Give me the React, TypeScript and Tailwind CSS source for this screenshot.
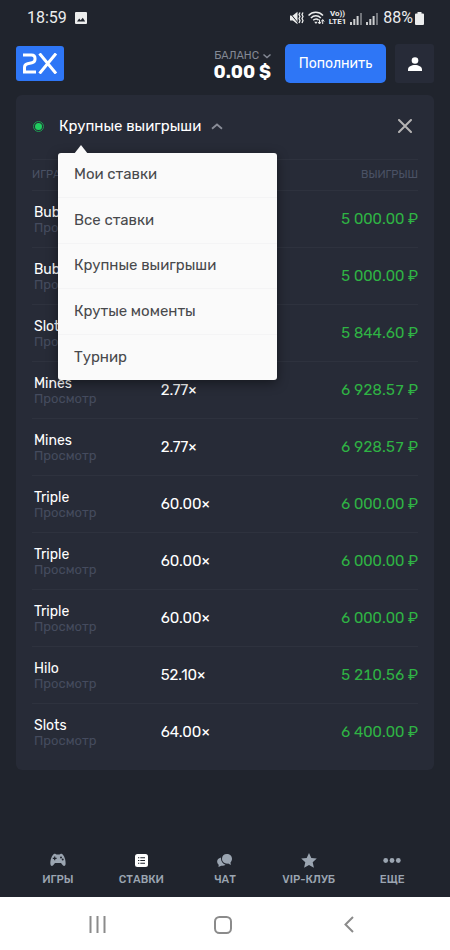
import { useState } from "react";
import type { ReactNode } from "react";

const bets = [
  { game: "Bubbles", odds: "", win: "5 000.00 ₽" },
  { game: "Bubbles", odds: "", win: "5 000.00 ₽" },
  { game: "Slots", odds: "", win: "5 844.60 ₽" },
  { game: "Mines", odds: "2.77×", win: "6 928.57 ₽" },
  { game: "Mines", odds: "2.77×", win: "6 928.57 ₽" },
  { game: "Triple", odds: "60.00×", win: "6 000.00 ₽" },
  { game: "Triple", odds: "60.00×", win: "6 000.00 ₽" },
  { game: "Triple", odds: "60.00×", win: "6 000.00 ₽" },
  { game: "Hilo", odds: "52.10×", win: "5 210.56 ₽" },
  { game: "Slots", odds: "64.00×", win: "6 400.00 ₽" },
];

const filters = ["Мои ставки", "Все ставки", "Крупные выигрыши", "Крутые моменты", "Турнир"];

export default function App() {
  return (
    <div className="flex min-h-screen flex-col bg-[#20242d] font-['Rubik','Roboto',sans-serif] text-white">
      <StatusBar />
      <Header />
      <main className="px-4">
        <BetsCard />
      </main>
      <BottomNav />
      <SystemBar />
    </div>
  );
}

function StatusBar() {
  return (
    <div className="flex h-[34px] items-center justify-between pt-0.5 pr-[26px] pl-[27px] font-['Roboto',sans-serif] text-base text-[#eceded]">
      <div className="flex items-center gap-2">
        <span>18:59</span>
        <svg width="12" height="12" viewBox="0 0 12 12">
          <rect width="12" height="12" rx="1" fill="#eceded" />
          <path d="M2 9.5 4.2 6.5 5.7 8.2 7.8 5.8 10.2 9.5Z" fill="#20242d" />
        </svg>
      </div>
      <div className="flex items-center gap-1">
        <svg width="15" height="14" viewBox="0 0 15 14">
          <path d="M1 4.5h2.800L8.500 .8v12.400L3.800 9.500H1Z" fill="#eceded" />
          <path d="M.5 1.500l9 11" stroke="#20242d" strokeWidth="1" />
          <path d="M11 1.500l-1 2 1 2-1 2 1 2-1 2.500M14 1.500l-1 2 1 2-1 2 1 2-1 2.500" fill="none" stroke="#eceded" strokeWidth="1.300" />
        </svg>
        <svg width="17" height="14" viewBox="0 0 17 14" fill="none" stroke="#eceded" strokeWidth="1.500">
          <path d="M.5 4.500c4-4.200 10.500-4.200 14.500 0M2.900 7c3-3 6.900-3 9.900 0M5.200 9.300c1.800-1.600 3.800-1.600 5.400-.2" />
          <path d="M6.200 10.700 8 13l1.500-2.300Z" fill="#eceded" stroke="none" />
          <path d="M11.500 8.500v4M10 11l1.500 2 1.500-2M14.700 13V9M13.200 10.500l1.500-2 1.500 2" strokeWidth="1" />
        </svg>
        <span className="flex flex-col items-center text-[8px] leading-[8px] font-bold">
          <span>Vo))</span>
          <span>LTE1</span>
        </span>
        <SignalBars />
        <SignalBars />
        <span className="ml-px flex items-center gap-0.5">
          88%
          <svg width="9" height="13" viewBox="0 0 9 13" fill="#eceded">
            <path d="M2.500 0h4v1.500H8a1 1 0 0 1 1 1V12a1 1 0 0 1-1 1H1a1 1 0 0 1-1-1V2.500a1 1 0 0 1 1-1h1.500Z" />
          </svg>
        </span>
      </div>
    </div>
  );
}

function SignalBars() {
  return (
    <svg width="12" height="13" viewBox="0 0 12 13" fill="#eceded">
      <path d="M0 10h2v3H0zM3.300 7h2v6h-2zM6.600 4h2v9h-2z" opacity=".85" />
      <path d="M10 1h2v12h-2z" opacity=".4" />
    </svg>
  );
}

function Header() {
  return (
    <header className="flex h-[61px] items-center px-4 pb-0.5">
      <a href="#home" aria-label="2X" className="flex h-[35px] w-12 items-center justify-center rounded-[3px] bg-[#2e76f6]">
        <svg width="36" height="21" viewBox="0 0 36 21" fill="none" stroke="#fff" strokeWidth="3">
          <path d="M1 2h8.500Q13 2 13 5.200v1Q13 9 10 9.700l-4.500 1Q2.500 11.400 2.500 14.500V19H14" />
          <path d="M17.500 .5 34 20.500M34 .5 17.500 20.500" />
        </svg>
      </a>
      <div className="ml-auto flex flex-col items-end">
        <button className="flex items-center gap-1 text-[11px] leading-4 text-[#848995]">
          БАЛАНС
          <svg width="8" height="6" viewBox="0 0 8 6" fill="none" stroke="currentColor" strokeWidth="1.500">
            <path d="M.5 1.500 4 4.500 7.500 1.500" />
          </svg>
        </button>
        <span className="text-lg leading-4 font-bold">0.00 $</span>
      </div>
      <button className="ml-3.5 h-[39px] w-[101px] rounded-[5px] bg-[#2e76f6] text-sm">Пополнить</button>
      <button aria-label="Профиль" className="ml-[9px] flex size-[39px] items-center justify-center rounded-[3px] bg-[#272b38]">
        <svg width="14" height="14" viewBox="0 0 14 14" fill="#fff">
          <circle cx="7" cy="3.500" r="3.300" />
          <path d="M0 14v-1.500C0 9.700 3.500 8 7 8s7 1.700 7 4.500V14Z" />
        </svg>
      </button>
    </header>
  );
}

function BetsCard() {
  const [open, setOpen] = useState(true);
  const [filter, setFilter] = useState(filters[2]);

  return (
    <section className="rounded-md bg-[#272b37] px-4 pb-[9px]">
      <div className="flex h-16 items-center justify-between pb-0.5 pl-px">
        <div className="relative flex items-center">
          <span className="flex size-[11px] items-center justify-center rounded-full border border-[#1c9d50]">
            <span className="size-[7px] rounded-full bg-[#20cf60]" />
          </span>
          <button onClick={() => setOpen(!open)} className="ml-[15px] flex items-center gap-2.5 text-[15px] leading-6">
            {filter}
            <svg width="12" height="7" viewBox="0 0 12 7" fill="none" stroke="#8a8d98" strokeWidth="1.800">
              <path d="M1 5.800 6 1.500l5 4.300" />
            </svg>
          </button>
          {open && (
            <div className="absolute top-[39px] left-[25px] z-10 w-[219px] rounded-[3px] bg-[#fafafa] shadow-[0_3px_12px_rgba(0,0,0,0.45)]">
              <svg width="14" height="9" viewBox="0 0 14 9" className="absolute -top-2 left-4" fill="#fafafa">
                <path d="M0 9 7 0l7 9Z" />
              </svg>
              <ul className="grid min-h-[227px] auto-rows-fr divide-y divide-[#f4f4f5]">
                {filters.map((name) => (
                  <li key={name}>
                    <button
                      onClick={() => {
                        setFilter(name);
                        setOpen(false);
                      }}
                      className="flex h-full w-full items-center px-4 pb-px text-[15px] text-[#48494c]"
                    >
                      {name}
                    </button>
                  </li>
                ))}
              </ul>
            </div>
          )}
        </div>
        <button aria-label="Закрыть" className="mr-1.5">
          <svg width="14" height="14" viewBox="0 0 14 14" stroke="#b5b3b3" strokeWidth="2" strokeLinecap="round">
            <path d="M1 1l12 12M13 1 1 13" />
          </svg>
        </button>
      </div>
      <table className="w-full table-fixed border-collapse">
        <thead>
          <tr className="h-[31px] border-y border-[#2e323e] text-[11px] text-[#4b5265]">
            <th className="w-1/3 text-left font-normal">ИГРА</th>
            <th className="w-1/3" />
            <th className="w-1/3 text-right font-normal">ВЫИГРЫШ</th>
          </tr>
        </thead>
        <tbody className="divide-y divide-[#2e323e]">
          {bets.map((bet, i) => (
            <tr key={i} className="h-[57px]">
              <td className="pt-0.5 pl-0.5">
                <div className="text-sm leading-[15px]">{bet.game}</div>
                <a href="#bet" className="block text-[13px] leading-4 text-[#454b5e]">Просмотр</a>
              </td>
              <td className="text-[15px]">{bet.odds}</td>
              <td className="text-right text-[15px] tabular-nums text-[#2fb344]">{bet.win}</td>
            </tr>
          ))}
        </tbody>
      </table>
    </section>
  );
}

function BottomNav() {
  return (
    <nav className="mt-auto grid grid-cols-5 px-4 pb-[9px] text-[11px] leading-4 font-medium text-[#9ba5b1]">
      <NavItem label="ИГРЫ">
        <svg width="16" height="14" viewBox="0 0 16 14" fill="currentColor">
          <path fillRule="evenodd" d="M4 1c1.200-.5 1.800.6 2.500.6h3c.7 0 1.300-1.100 2.500-.6C14 2 16 7 15.600 11c-.2 2.500-2.400 2.300-3.400.6L11 10H5l-1.200 1.600c-1 1.700-3.200 1.900-3.400-.6C0 7 2 2 4 1ZM4.100 3.500v1.300H2.800V6h1.300v1.300h1.200V6h1.300V4.800H5.300V3.500ZM11 3.500a1 1 0 1 0 0 2 1 1 0 0 0 0-2ZM12.700 5.500a1 1 0 1 0 0 2 1 1 0 0 0 0-2Z" />
        </svg>
      </NavItem>
      <NavItem label="СТАВКИ">
        <svg width="13" height="13" viewBox="0 0 13 13">
          <rect width="13" height="13" rx="2.500" fill="#fff" />
          <path d="M3 3.700h1.300M5.300 3.700H10M3 6.500h1.300M5.300 6.500H10M3 9.300h1.300M5.300 9.300H10" stroke="#20242d" strokeWidth="1.100" />
        </svg>
      </NavItem>
      <NavItem label="ЧАТ">
        <svg width="15" height="13" viewBox="0 0 15 13" fill="currentColor">
          <path d="M9.800 0C12.800 0 15 2 15 4.800c0 1.600-.7 2.800-1.500 3.700l.3 2.500-2.600-1.400C7.500 10 5 7.800 5 4.800 5 2 7 0 9.800 0Z" />
          <path d="M4 3.500C3.700 7 5.500 9.600 8.500 10.700c-1 .9-2.500 1.300-4.300 1L1.500 13l.2-2.300C-1 8.500-.2 4.500 4 3.500Z" />
        </svg>
      </NavItem>
      <NavItem label="VIP-КЛУБ">
        <svg width="16" height="15" viewBox="0 0 16 15" fill="currentColor">
          <path d="m8 0 2.300 5 5.500.6-4.100 3.700 1.200 5.400L8 12l-4.900 2.700 1.200-5.400L.2 5.600 5.700 5Z" />
        </svg>
      </NavItem>
      <NavItem label="ЕЩЕ">
        <svg width="18" height="5" viewBox="0 0 18 5" fill="currentColor">
          <circle cx="2.700" cy="2.500" r="2.400" />
          <circle cx="9" cy="2.500" r="2.400" />
          <circle cx="15.300" cy="2.500" r="2.400" />
        </svg>
      </NavItem>
    </nav>
  );
}

function NavItem({ label, children }: { label: string; children: ReactNode }) {
  return (
    <button className="flex flex-col items-center gap-1">
      <span className="flex h-4 items-center">{children}</span>
      {label}
    </button>
  );
}

function SystemBar() {
  return (
    <div className="grid h-[53px] grid-cols-3 items-center bg-white pt-0.5 pr-[38px] pl-[34px] text-[#8b8b8b]">
      <button aria-label="Недавние" className="flex justify-center">
        <svg width="17" height="17" viewBox="0 0 17 17" stroke="currentColor" strokeWidth="2">
          <path d="M1.500 0v17M8.500 0v17M15.500 0v17" />
        </svg>
      </button>
      <button aria-label="Домой" className="flex justify-center">
        <svg width="18" height="18" viewBox="0 0 18 18" fill="none" stroke="currentColor" strokeWidth="2">
          <rect x="1" y="1" width="16" height="16" rx="4.500" />
        </svg>
      </button>
      <button aria-label="Назад" className="flex justify-center">
        <svg width="10" height="17" viewBox="0 0 10 17" fill="none" stroke="currentColor" strokeWidth="2">
          <path d="M9 1 1.500 8.500 9 16" />
        </svg>
      </button>
    </div>
  );
}
